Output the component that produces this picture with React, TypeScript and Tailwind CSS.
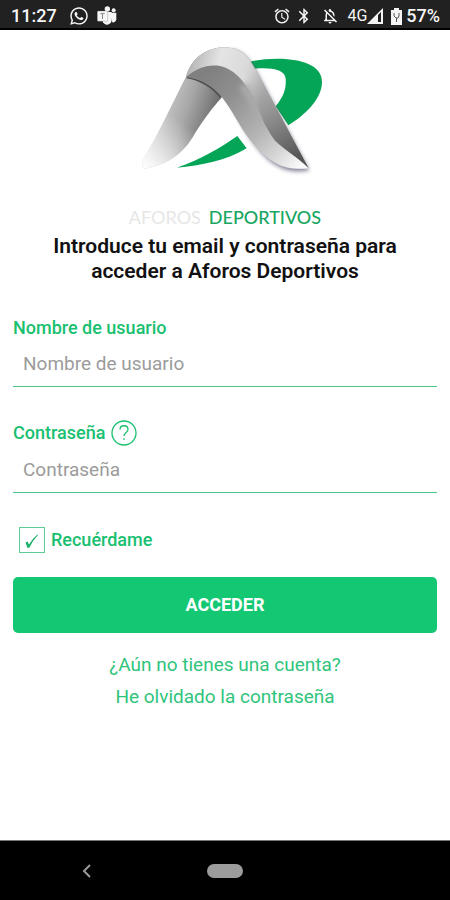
import { useState } from 'react';
import { FaWhatsapp } from 'react-icons/fa';
import { MdAlarm, MdBluetooth, MdOutlineNotificationsOff } from 'react-icons/md';

function TeamsIcon() {
  return (
    <svg viewBox="0 0 60 60" className="h-5 w-5" fill="#f5f5f5" aria-hidden="true">
      <circle cx="31" cy="9" r="8" />
      <circle cx="50" cy="13" r="6" />
      <path d="M37 20h21v20a10 10 0 0 1-12 9z" />
      <path d="M18 18h26v24a14 14 0 0 1-26 7z" />
      <rect x="1" y="15" width="31" height="31" rx="3" stroke="#777" strokeWidth="1" />
      <path d="M10 23h13M16.500 23v16" stroke="#888" strokeWidth="3" />
    </svg>
  );
}

function StatusBar() {
  return (
    <div className="flex h-[30px] items-center justify-between border-b-2 border-black bg-[#212121] pt-1 pr-[10px] pl-[11px] text-lg leading-6 font-medium text-[#f5f5f5]">
      <div className="flex items-center gap-2">
        <span className="mr-1">11:27</span>
        <FaWhatsapp className="h-5 w-5" />
        <TeamsIcon />
      </div>
      <div className="flex items-center">
        <MdAlarm className="mr-1 h-[18px] w-[18px]" stroke="currentColor" />
        <MdBluetooth className="mr-2 h-[18px] w-[18px]" stroke="currentColor" />
        <MdOutlineNotificationsOff className="mr-2 h-[18px] w-[18px]" stroke="currentColor" />
        <span className="text-base font-normal">4G</span>
        <svg viewBox="0 0 16 16" className="mr-2 h-4 w-4" fill="#f5f5f5" aria-hidden="true">
          <path fillRule="evenodd" d="M0 16 16 0v16zM11 7v7h3V4z" />
        </svg>
        <svg viewBox="0 0 11 17" className="mr-1 h-[17px] w-[11px]" aria-hidden="true">
          <path d="M3 0h5v2h3v15H0V2h3z" fill="#f5f5f5" />
          <path d="M3 5v3l2 2h2l1-2V5M5.500 10v4" stroke="#555" fill="none" />
        </svg>
        <span>57%</span>
      </div>
    </div>
  );
}

function Logo() {
  return (
    <svg viewBox="-15 0 600 420" className="h-[140px] w-[200px]" role="img" aria-label="Logotipo">
      <defs>
        <linearGradient id="leftLeg" gradientUnits="userSpaceOnUse" x1="90" y1="230" x2="245" y2="280">
          <stop offset="0" stopColor="#c8c8c8" />
          <stop offset="0.450" stopColor="#a8a8a8" />
          <stop offset="1" stopColor="#6c6c6c" />
        </linearGradient>
        <linearGradient id="leftFade" gradientUnits="userSpaceOnUse" x1="160" y1="260" x2="60" y2="400">
          <stop offset="0" stopColor="#fff" stopOpacity="0" />
          <stop offset="1" stopColor="#fff" stopOpacity="0.950" />
        </linearGradient>
        <linearGradient id="arch" gradientUnits="userSpaceOnUse" x1="170" y1="120" x2="400" y2="180">
          <stop offset="0" stopColor="#b5b5b5" />
          <stop offset="0.350" stopColor="#e4e4e4" />
          <stop offset="0.700" stopColor="#dadada" />
          <stop offset="1" stopColor="#b4b4b4" />
        </linearGradient>
        <linearGradient id="bandShade" gradientUnits="userSpaceOnUse" x1="340" y1="130" x2="490" y2="370">
          <stop offset="0" stopColor="#999" stopOpacity="0" />
          <stop offset="0.500" stopColor="#8a8a8a" stopOpacity="0.900" />
          <stop offset="1" stopColor="#555" />
        </linearGradient>
        <linearGradient id="inner" gradientUnits="userSpaceOnUse" x1="230" y1="110" x2="510" y2="390">
          <stop offset="0" stopColor="#808080" />
          <stop offset="0.250" stopColor="#8f8f8f" />
          <stop offset="0.600" stopColor="#b4b4b4" />
          <stop offset="0.800" stopColor="#d4d4d4" />
          <stop offset="1" stopColor="#fafafa" />
        </linearGradient>
        <filter id="shadow" x="-10%" y="-10%" width="120%" height="120%">
          <feGaussianBlur stdDeviation="6" />
        </filter>
        <filter id="blend" x="-20%" y="-20%" width="140%" height="140%">
          <feGaussianBlur stdDeviation="8" />
        </filter>
        <clipPath id="rightLeg">
          <path d="M168 124C184 61 240 28 298 35C342 38 361 72 380 106L536 397C455 406 408 377 345 291C305 232 276 119 168 124Z" />
        </clipPath>
      </defs>
      <path d="M360 77C430 60 576 61 576 137C576 192 520 240 475 268L437 211C463 179 469 155 467 128C465 99 421 94 373 98Z" fill="#05a557" />
      <path d="M322 300 350 337C290 374 213 389 140 395C213 370 269 337 322 300Z" fill="#05a557" />
      <path d="M168 122C210 105 255 130 276 184C244 219 220 253 195 292C170 338 128 385 43 398C35 388 35 373 42 366C87 291 124 207 168 122Z" fill="url(#leftLeg)" />
      <path d="M168 122C210 105 255 130 276 184C244 219 220 253 195 292C170 338 128 385 43 398C35 388 35 373 42 366C87 291 124 207 168 122Z" fill="url(#leftFade)" />
      <path d="M170 124Q232 135 272 184" stroke="#505050" strokeWidth="5" fill="none" />
      <path d="M290 180 298 35C342 38 361 72 380 106L536 397C457 411 403 373 346 282Z" fill="#5b5872" opacity="0.750" transform="translate(2 6)" filter="url(#shadow)" />
      <path d="M168 124C184 61 240 28 298 35C342 38 361 72 380 106L536 397C455 406 408 377 345 291C322 257 305 222 276 184Q234 130 168 124Z" fill="url(#inner)" />
      <path d="M168 124C184 61 240 28 298 35C342 38 361 72 380 106L536 397C501 361 463 342 434 313C400 265 392 235 385 220C354 147 320 101 270 90C235 84 198 96 168 124Z" fill="url(#arch)" />
      <path d="M168 124C184 61 240 28 298 35C342 38 361 72 380 106L536 397C501 361 463 342 434 313C400 265 392 235 385 220C354 147 320 101 270 90C235 84 198 96 168 124Z" fill="url(#bandShade)" />
      <g clipPath="url(#rightLeg)">
        <path d="M325 150C355 190 365 220 385 260C390 240 380 190 350 145Z" fill="#aaaaaa" filter="url(#blend)" />
      </g>
    </svg>
  );
}

const fieldClass =
  'block h-[47px] w-full border-b border-b-[#4cc485] bg-transparent px-[10px] text-[19px] text-[#444444] outline-none placeholder:text-[#9b9b9b]';
const labelClass = 'text-lg leading-6 font-medium text-[#18c070]';

export default function App() {
  const [remember, setRemember] = useState(true);

  return (
    <div className="flex min-h-screen flex-col bg-white font-['Roboto','Liberation_Sans',sans-serif]">
      <StatusBar />
      <main className="flex grow flex-col px-3">
        <header className="flex flex-col items-center pt-[6px] text-center">
          <Logo />
          <p className="mt-[29px] flex gap-2 font-['Lato',sans-serif] text-lg leading-6">
            <span className="text-[#e6e6e6]">AFOROS</span>
            <span className="font-medium text-[#18a662]">DEPORTIVOS</span>
          </p>
          <h1 className="mt-[5px] max-w-[380px] text-[21px] leading-[25px] font-semibold text-[#111]">
            Introduce tu email y contraseña para acceder a Aforos Deportivos
          </h1>
        </header>

        <form className="mt-8 flex flex-col px-px" onSubmit={(e) => e.preventDefault()}>
          <label htmlFor="user" className={labelClass}>
            Nombre de usuario
          </label>
          <input id="user" type="text" placeholder="Nombre de usuario" className={fieldClass} />

          <div className="mt-[33px] flex items-center gap-[6px]">
            <label htmlFor="password" className={labelClass}>
              Contraseña
            </label>
            <button type="button" aria-label="Ayuda" className="text-[#18c070]">
              <svg viewBox="0 0 26 26" className="h-[26px] w-[26px]" fill="none" stroke="currentColor" strokeWidth="1.300">
                <circle cx="13" cy="13" r="12" />
                <path d="M9 9.500C9 4.500 17 4.500 17 9.500C17 12.500 13 12.500 13 16M13 18.300v1.700" />
              </svg>
            </button>
          </div>
          <input id="password" type="password" placeholder="Contraseña" className={fieldClass} />

          <div className="mt-[34px] flex items-center gap-[6px] pl-[6px]">
            <span className="grid">
              <input
                id="remember"
                type="checkbox"
                checked={remember}
                onChange={(e) => setRemember(e.target.checked)}
                className="col-start-1 row-start-1 h-[26px] w-[26px] appearance-none border border-[#5fcb95]"
              />
              <svg
                viewBox="0 0 26 26"
                className={`pointer-events-none col-start-1 row-start-1 h-[26px] w-[26px] ${remember ? '' : 'hidden'}`}
                fill="#18b269"
                aria-hidden="true"
              >
                <path d="M6.500 15.500 8.500 14.500 10 17.500Q13 12 18.500 7.500L19 8Q14 13 10.500 20.500L8.500 21Z" />
              </svg>
            </span>
            <label htmlFor="remember" className={labelClass}>
              Recuérdame
            </label>
          </div>

          <button type="submit" className="mt-6 h-14 rounded-[5px] bg-[#14c873] text-lg font-bold text-white">
            ACCEDER
          </button>
        </form>

        <nav className="mt-4 flex flex-col items-center text-[19px] leading-8 text-[#2fc47b]">
          <a href="#registro">¿Aún no tienes una cuenta?</a>
          <a href="#recuperar">He olvidado la contraseña</a>
        </nav>
      </main>

      <footer className="grid h-[60px] grid-cols-[1fr_auto_1fr] items-center border-t border-[#777] bg-black">
        <button type="button" aria-label="Atrás" className="ml-[82px] justify-self-start text-[#999]">
          <svg viewBox="0 0 10 16" className="h-4 w-[10px]" fill="none" stroke="currentColor" strokeWidth="2">
            <path d="M8 2 2 8l6 6" />
          </svg>
        </button>
        <button type="button" aria-label="Inicio" className="h-[14px] w-9 rounded-full bg-[#9c9c9c]" />
      </footer>
    </div>
  );
}
